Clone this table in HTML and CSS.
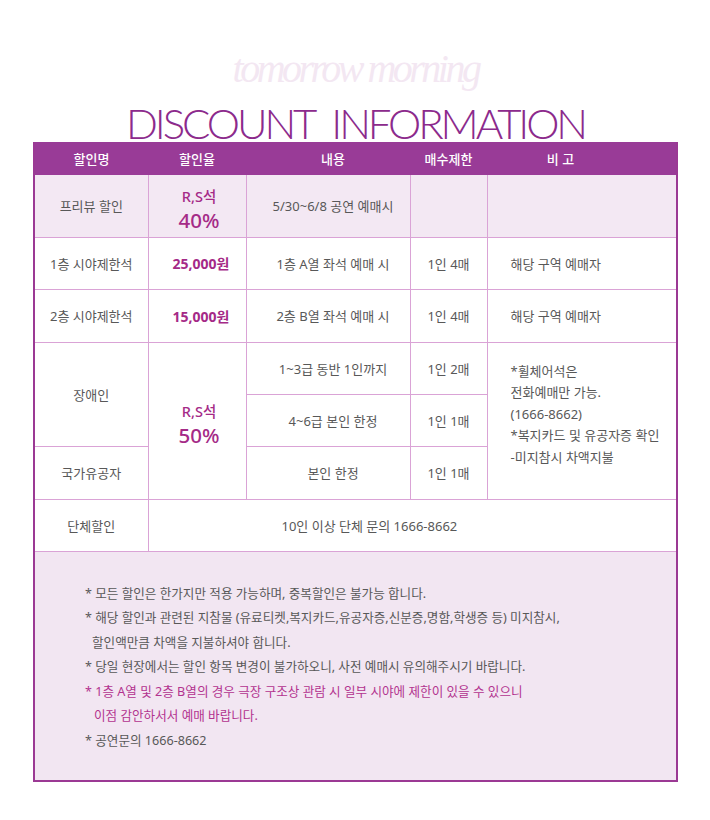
FILE: index.html
```html
<!DOCTYPE html>
<html lang="ko">
<head>
<meta charset="utf-8">
<title>Discount Information</title>
<link rel="stylesheet" href="styles.css">
</head>
<body>
<div class="page">
  <div class="hero">
    <div class="script">tomorrow morning</div>
    <h1 class="title">DISCOUNT INFORMATION</h1>
  </div>
  <div class="box">
    <table class="tbl">
      <colgroup>
        <col class="c1"><col class="c2"><col class="c3"><col class="c4"><col class="c5">
      </colgroup>
      <thead>
        <tr>
          <th>할인명</th>
          <th>할인율</th>
          <th class="h3">내용</th>
          <th>매수제한</th>
          <th class="h5">비 고</th>
        </tr>
      </thead>
      <tbody>
        <tr class="r1 tint">
          <td>프리뷰 할인</td>
          <td class="rate"><div class="seat">R,S석</div><div class="pct">40%</div></td>
          <td class="cont">5/30~6/8 공연 예매시</td>
          <td></td>
          <td class="note last"></td>
        </tr>
        <tr class="r2">
          <td>1층 시야제한석</td>
          <td class="price">25,000원</td>
          <td class="cont">1층 A열 좌석 예매 시</td>
          <td>1인 4매</td>
          <td class="note last">해당 구역 예매자</td>
        </tr>
        <tr class="r3">
          <td>2층 시야제한석</td>
          <td class="price">15,000원</td>
          <td class="cont">2층 B열 좌석 예매 시</td>
          <td>1인 4매</td>
          <td class="note last">해당 구역 예매자</td>
        </tr>
        <tr class="r4">
          <td rowspan="2">장애인</td>
          <td class="rate" rowspan="3"><div class="seat">R,S석</div><div class="pct">50%</div></td>
          <td class="cont">1~3급 동반 1인까지</td>
          <td>1인 2매</td>
          <td class="note multi last" rowspan="3">*휠체어석은<br>전화예매만 가능.<br>(1666-8662)<br>*복지카드 및 유공자증 확인<br>-미지참시 차액지불</td>
        </tr>
        <tr class="r5">
          <td class="cont">4~6급 본인 한정</td>
          <td>1인 1매</td>
        </tr>
        <tr class="r6">
          <td>국가유공자</td>
          <td class="cont">본인 한정</td>
          <td>1인 1매</td>
        </tr>
        <tr class="r7">
          <td>단체할인</td>
          <td class="group last" colspan="4">10인 이상 단체 문의 1666-8662</td>
        </tr>
      </tbody>
    </table>
    <div class="notes">
      <div class="ln">* 모든 할인은 한가지만 적용 가능하며, 중복할인은 불가능 합니다.</div>
      <div class="ln">* 해당 할인과 관련된 지참물 (유료티켓,복지카드,유공자증,신분증,명함,학생증 등) 미지참시,</div>
      <div class="ln ind">할인액만큼 차액을 지불하셔야 합니다.</div>
      <div class="ln">* 당일 현장에서는 할인 항목 변경이 불가하오니, 사전 예매시 유의해주시기 바랍니다.</div>
      <div class="ln pink">* 1층 A열 및 2층 B열의 경우 극장 구조상 관람 시 일부 시야에 제한이 있을 수 있으니</div>
      <div class="ln pink ind2">이점 감안하서서 예매 바랍니다.</div>
      <div class="ln">* 공연문의 1666-8662</div>
    </div>
  </div>
</div>
</body>
</html>
```
FILE: styles.css
```css
* { box-sizing: border-box; }

body {
  margin: 0;
  background: #ffffff;
  font-family: "Noto Sans", "Noto Sans CJK KR", sans-serif;
}

.page {
  width: 645px;
  margin-left: 33px;
}

.hero {
  height: 142px;
  text-align: center;
}

.script {
  padding-top: 49px;
  height: 89px;
  font-family: "Liberation Serif", serif;
  font-style: italic;
  font-size: 40px;
  line-height: 40px;
  letter-spacing: -3.5px;
  color: #f3e7f2;
}

.title {
  margin: 15px 0 0;
  font-family: Lato, "Liberation Sans", sans-serif;
  font-weight: 300;
  font-size: 42px;
  line-height: 38px;
  letter-spacing: -3.1px;
  word-spacing: 10px;
  color: #8c2a8c;
  white-space: nowrap;
}

.box {
  border: 2px solid #9b3994;
  border-top: 0;
}

.tbl {
  width: 641px;
  border-collapse: collapse;
  table-layout: fixed;
}

.c1 { width: 113px; }
.c2 { width: 98px; }
.c3 { width: 164px; }
.c4 { width: 77px; }
.c5 { width: 189px; }

.tbl th {
  height: 33px;
  padding: 0;
  background: #993b97;
  color: #ffffff;
  font-size: 13px;
  font-weight: 500;
}

.tbl th.h3 { padding-left: 10px; }
.tbl th.h5 { padding-right: 42px; }

.tbl td {
  padding: 0;
  border-right: 1px solid #daa3d6;
  border-bottom: 1px solid #daa3d6;
  text-align: center;
  vertical-align: middle;
  font-size: 13px;
  color: #585858;
}

.tbl td.last { border-right: 0; }

.tint td { background: #f3e8f3; }

.r1 { height: 62px; }
.r2 { height: 52px; }
.r3 { height: 53px; }
.r4 { height: 52px; }
.r5 { height: 52px; }
.r6 { height: 53px; }
.r7 { height: 52px; }

.tbl td.cont { padding-left: 10px; }

.tbl td.note {
  text-align: left;
  padding-left: 23px;
}

.tbl td.multi {
  line-height: 21.5px;
  padding-bottom: 12px;
}

.tbl td.group {
  text-align: left;
  padding-left: 133px;
}

.tbl td.price {
  padding-left: 8px;
  font-size: 14px;
  font-weight: 700;
  color: #a52a87;
}

.tbl td.rate {
  padding: 8px 0 0 4px;
  color: #a52a87;
}

.seat {
  font-size: 14.5px;
  font-weight: 500;
  line-height: 20px;
}

.pct {
  font-size: 20.5px;
  font-weight: 500;
  line-height: 28px;
}

.notes {
  background: #f2e6f2;
  padding: 30px 0 27px 50px;
  font-size: 12.6px;
  line-height: 24.5px;
  color: #585858;
}

.ln { white-space: nowrap; }
.ind { padding-left: 7px; }
.ind2 { padding-left: 9px; }
.pink { color: #b2338f; }
```
